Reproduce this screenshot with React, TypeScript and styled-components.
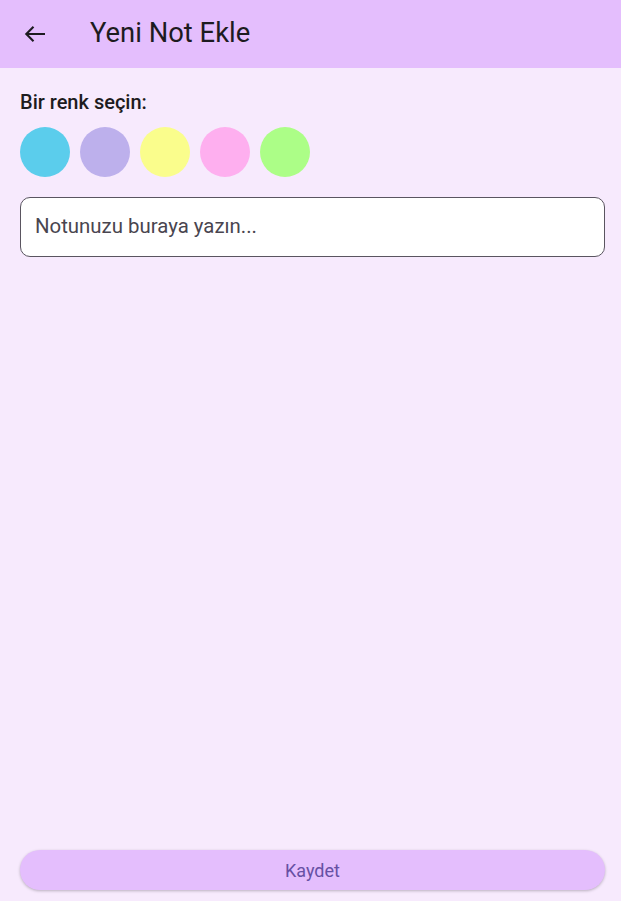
import React from "react";
import styled, { createGlobalStyle } from "styled-components";

const Global = createGlobalStyle`
  html, body { margin: 0; padding: 0; }
  body { background: #f7eafd; font-family: Roboto, "Noto Sans", sans-serif; }
  * { box-sizing: border-box; }
`;

const Page = styled.div`
  width: 621px;
  height: 901px;
  display: flex;
  flex-direction: column;
  background: #f7eafd;
`;

const AppBar = styled.header`
  height: 68px;
  flex: none;
  display: flex;
  align-items: center;
  background: #e4befd;
  padding-left: 23px;
  gap: 43px;
`;

const IconButton = styled.button`
  width: 24px;
  height: 24px;
  padding: 0;
  border: none;
  background: none;
  display: flex;
  align-items: center;
  justify-content: center;
  color: #1d1b20;
`;

const Title = styled.h1`
  margin: 0;
  font-size: 27.4px;
  font-weight: 400;
  color: #1d1b20;
  letter-spacing: 0;
  margin-top: -2px;
`;

const Body = styled.main`
  flex: 1;
  display: flex;
  flex-direction: column;
  padding: 20px 16px 11px 20px;
`;

const Label = styled.div`
  font-size: 20px;
  font-weight: 500;
  color: #1d1b20;
  line-height: 28px;
  margin-top: 0;
`;

const Swatches = styled.div`
  display: flex;
  gap: 10px;
  margin-top: 11px;
`;

const Swatch = styled.div<{ $c: string }>`
  width: 50px;
  height: 50px;
  border-radius: 50%;
  background: ${(p) => p.$c};
`;

const Input = styled.div`
  margin-top: 20px;
  height: 60px;
  border: 1px solid #5a5560;
  border-radius: 10px;
  background: #ffffff;
  display: flex;
  align-items: center;
  padding-left: 14px;
  padding-bottom: 2px;
  font-size: 20.4px;
  color: #49454f;
`;

const Spacer = styled.div`
  flex: 1;
`;

const SaveButton = styled.button`
  height: 40px;
  border: none;
  border-radius: 20px;
  background: #e4befd;
  color: #6750a4;
  font-family: Roboto, sans-serif;
  font-size: 18px;
  box-shadow: 0 1px 3px rgba(0, 0, 0, 0.25);
`;

const colors = ["#5bcdec", "#bdb0ec", "#fafd8c", "#feafef", "#acfe87"];

export default function App() {
  return (
    <Page>
      <Global />
      <AppBar>
        <IconButton aria-label="Geri">
          <svg width="24" height="24" viewBox="0 0 24 24" fill="none">
            <path
              d="M22 12H3.5M10.5 4.8L3.3 12l7.2 7.2"
              stroke="currentColor"
              strokeWidth="2.1"
            />
          </svg>
        </IconButton>
        <Title>Yeni Not Ekle</Title>
      </AppBar>
      <Body>
        <Label>Bir renk seçin:</Label>
        <Swatches>
          {colors.map((c) => (
            <Swatch key={c} $c={c} />
          ))}
        </Swatches>
        <Input>Notunuzu buraya yazın...</Input>
        <Spacer />
        <SaveButton>Kaydet</SaveButton>
      </Body>
    </Page>
  );
}
